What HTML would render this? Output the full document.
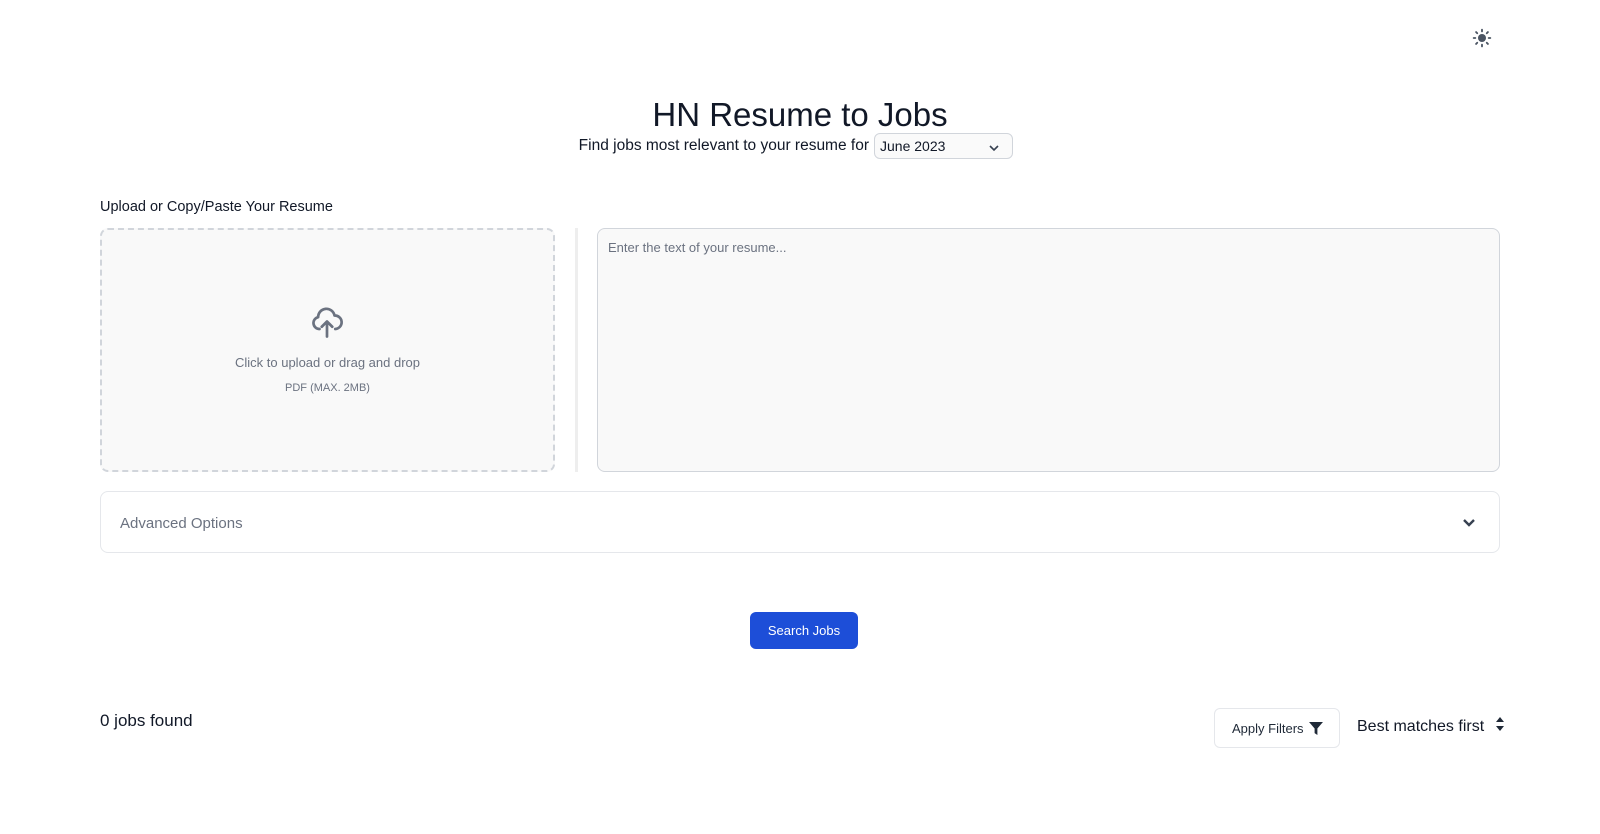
<!DOCTYPE html>
<html><head><style>
*{box-sizing:border-box;margin:0;padding:0}
body{width:1600px;height:834px;background:#fff;font-family:"Liberation Sans",sans-serif;color:#111827;position:relative;overflow:hidden}
.abs{position:absolute}
</style></head><body>
<svg class="abs" style="left:1472px;top:28px" width="20" height="20" viewBox="0 0 24 24" fill="#4b5563" stroke="#4b5563" stroke-width="2.2" stroke-linecap="round"><circle cx="12" cy="12" r="4.8" stroke="none"/><path d="M12 2v2M12 20v2M2 12h2M20 12h2M4.9 4.9l1.4 1.4M17.7 17.7l1.4 1.4M4.9 19.1l1.4-1.4M17.7 6.3l1.4-1.4"/></svg>
<div class="abs" style="left:0;width:1600px;top:96px;text-align:center;font-size:33px;color:#111827">HN Resume to Jobs</div>
<div class="abs" style="left:560px;width:309px;text-align:right;top:137px;font-size:15.5px;color:#111827">Find jobs most relevant to your resume for</div>
<div class="abs" style="left:874px;top:133px;width:139px;height:26px;border:1px solid #d1d5db;border-radius:6px;font-size:14px;padding:4px 5px;background:#fafafa">June 2023
<svg class="abs" style="right:12px;top:9px" width="12" height="10" viewBox="0 0 12 10" fill="none" stroke="#374151" stroke-width="1.6"><path d="M2 3l4 4 4-4"/></svg></div>
<div class="abs" style="left:100px;top:199px;font-size:14.5px;color:#111827">Upload or Copy/Paste Your Resume</div>
<div class="abs" style="left:100px;top:228px;width:455px;height:244px;border:2px dashed #d1d5db;border-radius:8px;background:#f9f9f9"></div>
<svg class="abs" style="left:309px;top:305px" width="36" height="36" viewBox="0 0 24 24" fill="none" stroke="#6b7280" stroke-width="1.8" stroke-linecap="round" stroke-linejoin="round"><path d="M7 16a4 4 0 0 1-.9-7.9A5.5 5.5 0 0 1 17 7a4.5 4.5 0 0 1 .5 9"/><path d="M12 21V11M8.5 14.5L12 11l3.5 3.5"/></svg>
<div class="abs" style="left:100px;width:455px;top:355px;text-align:center;font-size:13px;color:#6b7280">Click to upload or drag and drop</div>
<div class="abs" style="left:100px;width:455px;top:382px;text-align:center;font-size:11px;color:#6b7280">PDF (MAX. 2MB)</div>
<div class="abs" style="left:575px;top:228px;width:3px;height:244px;background:#eeeeee"></div>
<div class="abs" style="left:597px;top:228px;width:903px;height:244px;border:1px solid #d1d5db;border-radius:8px;background:#f9f9f9;font-size:13px;color:#6b7280;padding:11px 10px">Enter the text of your resume...</div>
<div class="abs" style="left:100px;top:491px;width:1400px;height:62px;border:1px solid #e5e7eb;border-radius:8px;font-size:15px;color:#6b7280;padding:23px 19px">Advanced Options
<svg class="abs" style="right:23px;top:26px" width="14" height="10" viewBox="0 0 14 10" fill="none" stroke="#374151" stroke-width="2.4"><path d="M2 2l5 5 5-5"/></svg></div>
<div class="abs" style="left:750px;top:612px;width:108px;height:37px;background:#1d4ed8;border-radius:6px;color:#fff;font-size:13px;text-align:center;line-height:37px">Search Jobs</div>
<div class="abs" style="left:100px;top:711px;font-size:17px;color:#111827">0 jobs found</div>
<div class="abs" style="left:1214px;top:708px;width:126px;height:40px;border:1px solid #e5e7eb;border-radius:6px;font-size:13px;color:#1f2937;padding:12px 17px">Apply Filters
<svg class="abs" style="left:94px;top:13px" width="14" height="13" viewBox="0 0 15 14" fill="#1f2937"><path d="M0 0h15L9 7v7L6 12V7z"/></svg></div>
<div class="abs" style="left:1357px;top:718px;font-size:16px;color:#111827">Best matches first</div>
<svg class="abs" style="left:1495px;top:716px" width="10" height="16" viewBox="0 0 10 16" fill="#1f2937"><path d="M5 1l4 5H1zM5 15l4-5H1z"/></svg>
</body></html>
